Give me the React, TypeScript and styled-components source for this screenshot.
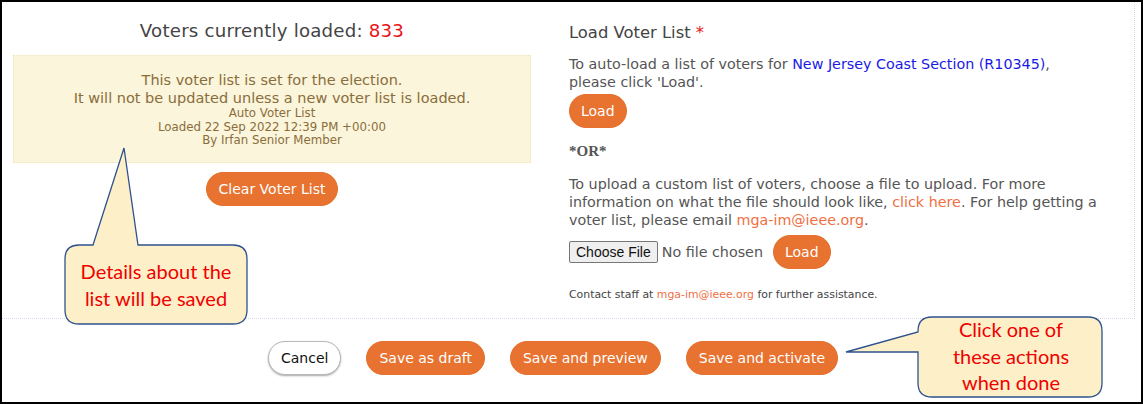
import React from "react";
import styled, { createGlobalStyle } from "styled-components";

const Global = createGlobalStyle`
  html, body { margin: 0; padding: 0; background: #fff; }
  body { font-family: "DejaVu Sans", Verdana, sans-serif; }
  * { box-sizing: border-box; }
`;

const Frame = styled.div`
  position: relative;
  width: 1143px;
  height: 404px;
  border: 2px solid #000;
  overflow: hidden;
  background: #fff;
`;

const Panel = styled.div`
  display: grid;
  grid-template-columns: 538px 1fr;
  height: 317px;
  margin-right: 6px;
  border-right: 1px dotted #d8d8e0;
  border-bottom: 1px dotted #d8d8e8;
`;

const LeftCol = styled.div`
  display: flex;
  flex-direction: column;
  align-items: center;
  padding: 18px 9px 0 11px;
`;

const Counter = styled.h2`
  margin: 0;
  font-weight: normal;
  font-size: 18.2px;
  line-height: 22px;
  color: #444;
  letter-spacing: 0.2px;
`;

const Red = styled.span`
  color: #e8141a;
`;

const Notice = styled.div`
  margin-top: 13px;
  width: 100%;
  background: #fbf5dc;
  border: 1px dotted #f1e4bb;
  color: #8a6d3b;
  text-align: center;
  padding: 15px 8px 14px;
`;

const NoticeLine = styled.div<{ $small?: boolean }>`
  font-size: ${(p) => (p.$small ? "11.8px" : "14.5px")};
  line-height: ${(p) => (p.$small ? "13.5px" : "18px")};
`;

const Pill = styled.button<{ $ghost?: boolean }>`
  font-family: "DejaVu Sans", Verdana, sans-serif;
  font-size: 14px;
  height: 34px;
  padding: 0 12px;
  border-radius: 17px;
  cursor: pointer;
  border: ${(p) => (p.$ghost ? "1px solid #b9b9b9" : "1px solid #e6702c")};
  background: ${(p) => (p.$ghost ? "#fff" : "#e8722f")};
  color: ${(p) => (p.$ghost ? "#111" : "#fff")};
  box-shadow: ${(p) => (p.$ghost ? "0 1px 2px rgba(0,0,0,0.35)" : "none")};
  white-space: nowrap;
`;

const ClearButton = styled(Pill)`
  margin-top: 9px;
`;

const RightCol = styled.div`
  padding: 20px 20px 0 29px;
  color: #555;
`;

const Title = styled.h2`
  margin: 0;
  font-weight: normal;
  font-size: 16.4px;
  line-height: 22px;
  color: #444;
`;

const Para = styled.p<{ $gap?: number }>`
  margin: ${(p) => p.$gap ?? 0}px 0 0;
  font-size: 14.3px;
  line-height: 18px;
`;

const Blue = styled.a`
  color: #1a1ae6;
  text-decoration: none;
`;

const Orange = styled.a`
  color: #ef6f43;
  text-decoration: none;
`;

const LoadBtn = styled(Pill)`
  padding: 0 11px;
  margin-top: 3px;
  display: block;
`;

const Or = styled.div`
  margin-top: 14px;
  font-family: "Liberation Serif", "DejaVu Serif", serif;
  font-weight: bold;
  font-size: 15px;
  line-height: 18px;
  color: #555;
`;

const FileRow = styled.div`
  display: flex;
  align-items: center;
  margin-top: 6px;
  gap: 6px;
`;

const FileInput = styled.input`
  font-family: "DejaVu Sans", Verdana, sans-serif;
  font-size: 14.3px;
  color: #555;
  width: 198px;
  &::file-selector-button {
    font-family: "Liberation Sans", Arial, sans-serif;
    font-size: 14px;
    color: #111;
    background: #efefef;
    border: 1px solid #767676;
    border-radius: 2px;
    padding: 2px 6px;
    margin-right: 4px;
  }
`;

const SmallLoad = styled(Pill)`
  padding: 0 11px;
`;

const Small = styled.div`
  margin-top: 19px;
  font-size: 10.9px;
  line-height: 13px;
  color: #444;
`;

const Actions = styled.div`
  display: flex;
  justify-content: center;
  align-items: center;
  gap: 25px;
  padding: 22px 37px 0 0;
`;

const CalloutSvg = styled.svg`
  position: absolute;
  left: 0;
  top: 0;
  pointer-events: none;
`;

const CalloutText = styled.div<{ $x: number; $y: number; $w: number }>`
  position: absolute;
  left: ${(p) => p.$x}px;
  top: ${(p) => p.$y}px;
  width: ${(p) => p.$w}px;
  text-align: center;
  font-family: Lato, "Open Sans", sans-serif;
  font-size: 20px;
  line-height: 26.5px;
  color: #f00000;
`;

export default function App() {
  return (
    <>
      <Global />
      <Frame>
        <Panel>
          <LeftCol>
            <Counter>
              Voters currently loaded: <Red>833</Red>
            </Counter>
            <Notice>
              <NoticeLine>This voter list is set for the election.</NoticeLine>
              <NoticeLine>It will not be updated unless a new voter list is loaded.</NoticeLine>
              <NoticeLine $small>Auto Voter List</NoticeLine>
              <NoticeLine $small>Loaded 22 Sep 2022 12:39 PM +00:00</NoticeLine>
              <NoticeLine $small>By Irfan Senior Member</NoticeLine>
            </Notice>
            <ClearButton>Clear Voter List</ClearButton>
          </LeftCol>
          <RightCol>
            <Title>
              Load Voter List <Red>*</Red>
            </Title>
            <Para $gap={11}>
              To auto-load a list of voters for <Blue>New Jersey Coast Section (R10345)</Blue>,
              <br />
              please click 'Load'.
            </Para>
            <LoadBtn>Load</LoadBtn>
            <Or>*OR*</Or>
            <Para $gap={15}>
              To upload a custom list of voters, choose a file to upload. For more
              <br />
              information on what the file should look like, <Orange>click here</Orange>. For help getting a
              <br />
              voter list, please email <Orange>mga-im@ieee.org</Orange>.
            </Para>
            <FileRow>
              <FileInput type="file" />
              <SmallLoad>Load</SmallLoad>
            </FileRow>
            <Small>
              Contact staff at <Orange>mga-im@ieee.org</Orange> for further assistance.
            </Small>
          </RightCol>
        </Panel>
        <Actions>
          <Pill $ghost>Cancel</Pill>
          <Pill>Save as draft</Pill>
          <Pill>Save and preview</Pill>
          <Pill>Save and activate</Pill>
        </Actions>

        <CalloutSvg width="1143" height="404" viewBox="0 0 1143 404">
          <path
            d="M77 243 L91 243 L122 146 L136 243 L231 243 Q245 243 245 257 L245 308 Q245 322 231 322 L77 322 Q63 322 63 308 L63 257 Q63 243 77 243 Z"
            fill="#fdf0c8"
            stroke="#2f528f"
            strokeWidth="1.3"
          />
          <path
            d="M930 315 L1086 315 Q1100 315 1100 329 L1100 381 Q1100 395 1086 395 L930 395 Q916 395 916 381 L916 350 L844 350 L916 330 L916 329 Q916 315 930 315 Z"
            fill="#fdf0c8"
            stroke="#2f528f"
            strokeWidth="1.3"
          />
        </CalloutSvg>
        <CalloutText $x={61} $y={256} $w={186}>
          Details about the
          <br />
          list will be saved
        </CalloutText>
        <CalloutText $x={916} $y={314} $w={186}>
          Click one of
          <br />
          these actions
          <br />
          when done
        </CalloutText>
      </Frame>
    </>
  );
}
